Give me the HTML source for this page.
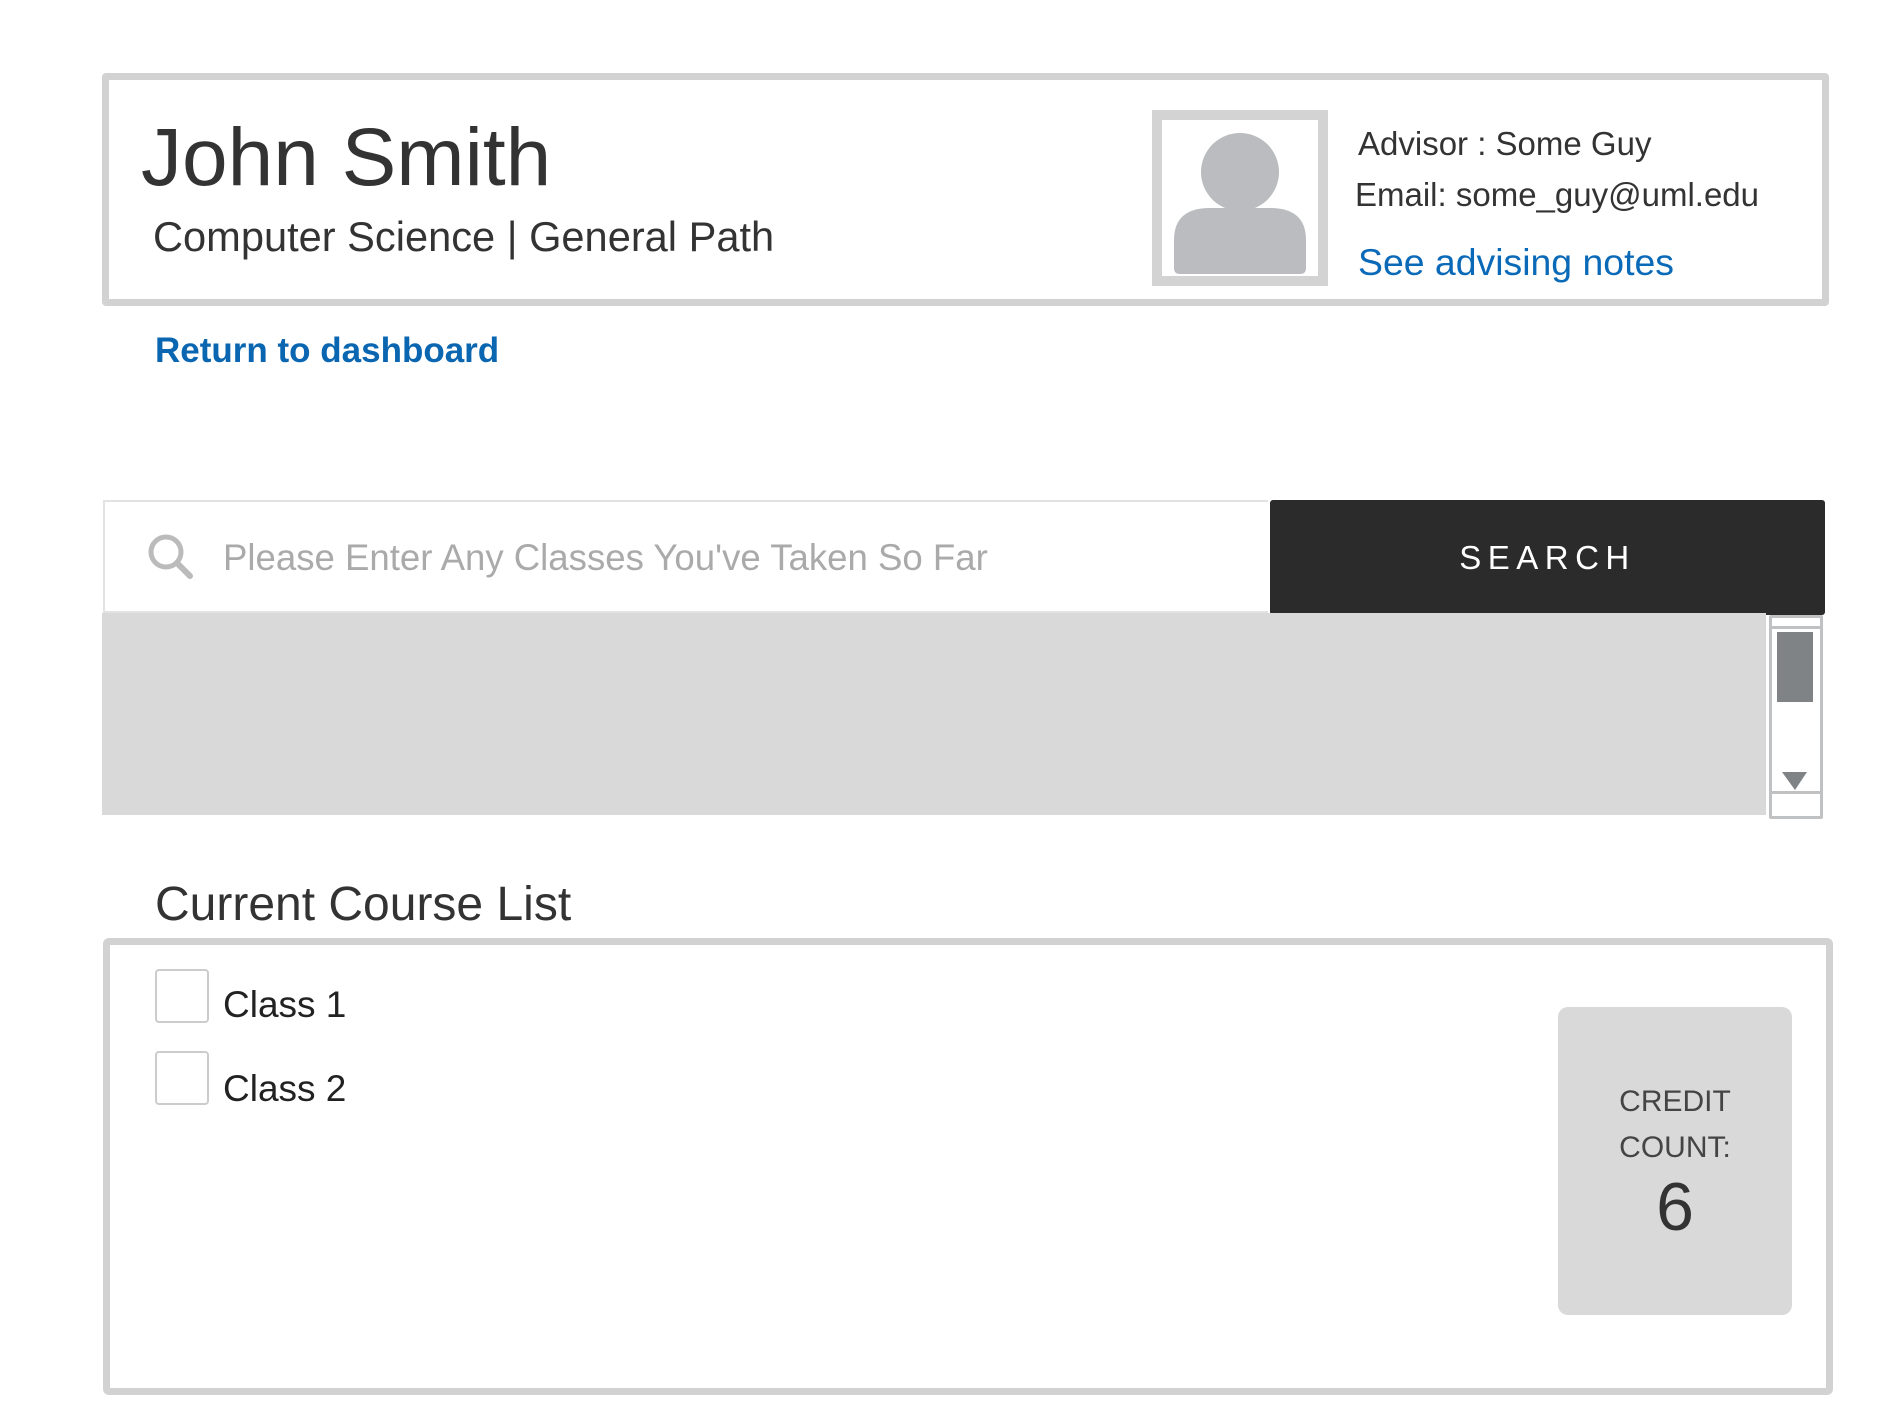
<!DOCTYPE html>
<html><head><style>
body{margin:0;width:1889px;height:1407px;background:#fff;font-family:"Liberation Sans",sans-serif;position:relative;overflow:hidden;color:#333}
.a{position:absolute}
</style></head><body>
<div class="a" style="left:102px;top:73px;width:1713px;height:219px;border:7px solid #d2d2d2;border-radius:4px"></div>
<div class="a" style="left:141px;top:108px;font-size:82px;line-height:100px;color:#333">John Smith</div>
<div class="a" style="left:153px;top:213px;font-size:41.6px;line-height:48px;color:#333">Computer Science | General Path</div>
<div class="a" style="left:1152px;top:110px;width:156px;height:156px;border:10px solid #d3d3d3;background:#fff;overflow:hidden">
<svg width="156" height="156" viewBox="0 0 156 156"><circle cx="78" cy="52" r="39" fill="#bbbcbf"/><path d="M12 148 V120 Q12 88 48 88 H108 Q144 88 144 120 V148 Q144 154 138 154 H18 Q12 154 12 148Z" fill="#bbbcbf"/></svg></div>
<div class="a" style="left:1358px;top:124px;font-size:33px;line-height:40px;color:#333">Advisor : Some Guy</div>
<div class="a" style="left:1355px;top:175px;font-size:33px;line-height:40px;color:#333">Email: some_guy@uml.edu</div>
<div class="a" style="left:1358px;top:239px;font-size:37.4px;line-height:46px;color:#0a6ab8">See advising notes</div>
<div class="a" style="left:155px;top:331px;font-size:35px;line-height:40px;font-weight:bold;color:#0a66b0">Return to dashboard</div>
<div class="a" style="left:103px;top:500px;width:1163px;height:109px;border:2px solid #e2e2e2;border-right:none"></div>
<svg class="a" style="left:146px;top:532px" width="50" height="50" viewBox="0 0 50 50"><circle cx="20" cy="20" r="15" fill="none" stroke="#bbb" stroke-width="5"/><line x1="31" y1="31" x2="44" y2="44" stroke="#bbb" stroke-width="6" stroke-linecap="round"/></svg>
<div class="a" style="left:223px;top:535px;font-size:36.6px;line-height:46px;color:#aaa">Please Enter Any Classes You've Taken So Far</div>
<div class="a" style="left:1270px;top:500px;width:555px;height:115px;background:#2b2b2b;border-radius:3px;color:#fff;font-size:33px;line-height:115px;text-align:center;letter-spacing:6.5px">SEARCH</div>
<div class="a" style="left:102px;top:613px;width:1664px;height:202px;background:#d9d9d9"></div>
<div class="a" style="left:1769px;top:615px;width:48px;height:198px;border:3px solid #bfc1c3;border-radius:2px;background:#fff"></div>
<div class="a" style="left:1772px;top:626px;width:48px;height:3px;background:#bfc1c3"></div>
<div class="a" style="left:1772px;top:791px;width:48px;height:3px;background:#bfc1c3"></div>
<div class="a" style="left:1777px;top:632px;width:36px;height:70px;background:#7f8386"></div>
<svg class="a" style="left:1782px;top:770px" width="26" height="22"><polygon points="0,2 25,2 13,20" fill="#7f8386"/></svg>
<div class="a" style="left:155px;top:877px;font-size:48px;line-height:56px;color:#333">Current Course List</div>
<div class="a" style="left:103px;top:938px;width:1716px;height:443px;border:7px solid #d2d2d2;border-radius:6px"></div>
<div class="a" style="left:155px;top:969px;width:50px;height:50px;border:2px solid #ccc;border-radius:4px"></div>
<div class="a" style="left:223px;top:982px;font-size:37px;line-height:46px;color:#222">Class 1</div>
<div class="a" style="left:155px;top:1051px;width:50px;height:50px;border:2px solid #ccc;border-radius:4px"></div>
<div class="a" style="left:223px;top:1066px;font-size:37px;line-height:46px;color:#222">Class 2</div>
<div class="a" style="left:1558px;top:1007px;width:234px;height:308px;background:#d9d9d9;border-radius:10px;text-align:center;color:#444">
<div style="margin-top:72px;font-size:30px;line-height:46px">CREDIT<br>COUNT:</div>
<div style="font-size:68px;line-height:72px;color:#333">6</div></div>
</body></html>
